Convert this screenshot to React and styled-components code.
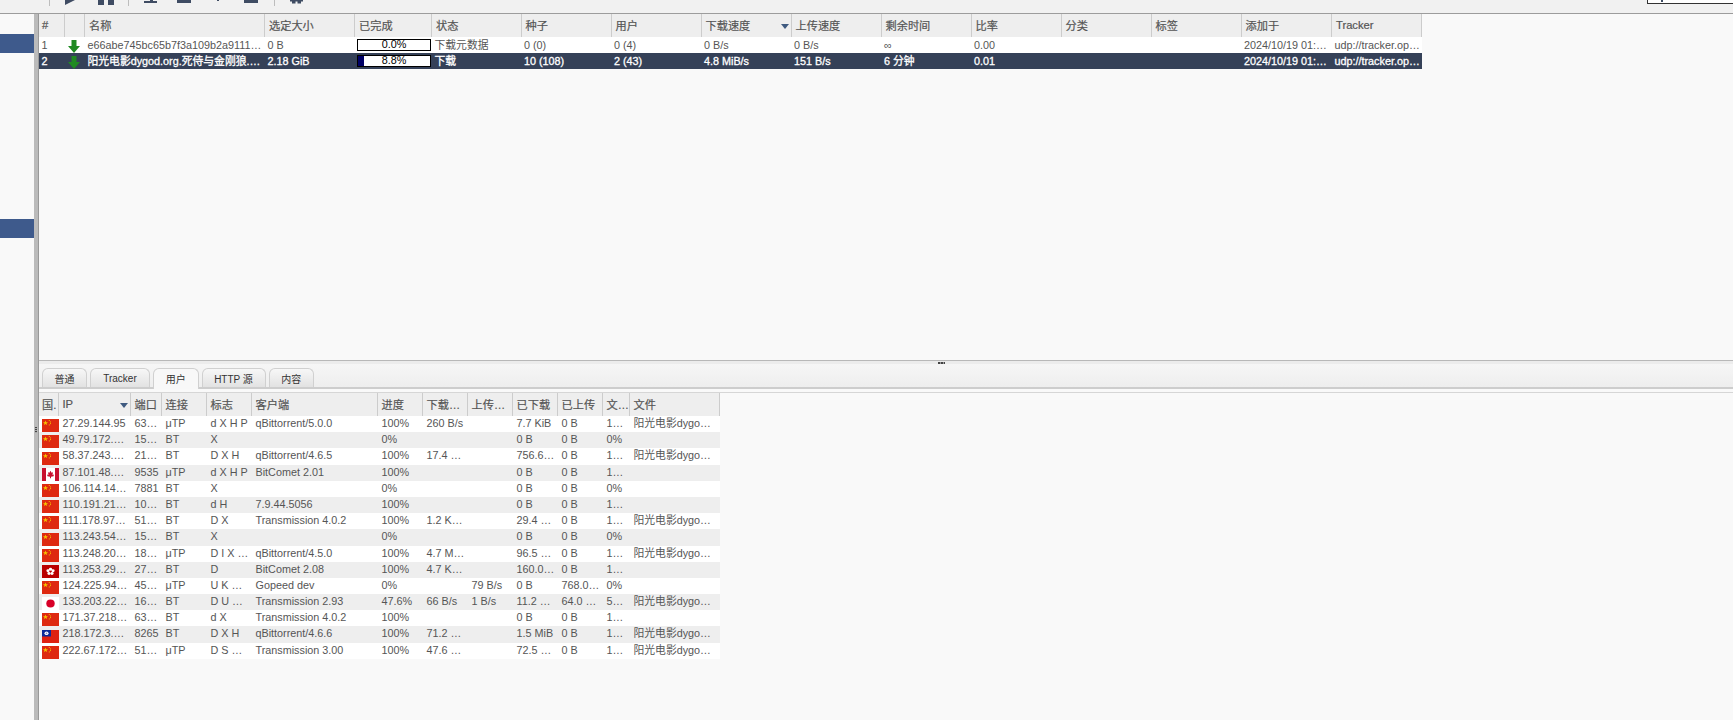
import React from 'react'
import styled, {createGlobalStyle} from 'styled-components'

const GlobalStyle = createGlobalStyle`
  html, body {
    margin: 0;
    padding: 0;
    height: 100%;
    overflow: hidden;
    background: #f9f9f9;
    color: #555;
    font-family: "Liberation Sans", "Noto Sans CJK SC", sans-serif;
    font-size: 10.8px;
  }
`

const Page = styled.div`
  display: flex;
  flex-direction: column;
  width: 1733px;
  height: 720px;
  overflow: hidden;
`

const Toolbar = styled.div`
  display: flex;
  align-items: flex-start;
  flex: none;
  height: 13px;
  padding-left: 49px;
  background: #f1f1f1;
  border-bottom: 1px solid #9c9c9c;
  overflow: hidden;
`

const ToolGroup = styled.div`
  display: flex;
  gap: 17px;
  height: 6px;
  padding: 0 ${(p) => p.$right || 15}px 0 15px;
  border-left: 1px solid #bdbdbd;
  margin-left: ${(p) => (p.$first ? 0 : -1)}px;
`

const ToolIcon = styled.svg`
  flex: none;
  width: 16px;
  height: 16px;
  margin-top: -11px;
  fill: #3f4c63;
`

const SearchBox = styled.div`
  width: 86px;
  height: 4px;
  margin-left: auto;
  background: #fff;
  border: 1px solid #333;
  border-top: none;
  border-right: none;
  padding-left: 13px;
  box-sizing: border-box;
`

const SearchStem = styled.div`
  width: 2px;
  height: 2px;
  background: #3f4c63;
`

const Body = styled.div`
  display: flex;
  flex: 1;
  min-height: 0;
`

const Sidebar = styled.div`
  flex: none;
  width: 34px;
  padding-top: 20px;
  box-sizing: border-box;
  background: #f9f9f9;
`

const SideItem = styled.div`
  height: 18.5px;
  background: ${(p) => (p.$selected ? '#3e5a8c' : 'transparent')};
`

const VSplitter = styled.div`
  position: relative;
  flex: none;
  width: 4px;
  background: #bbb;
  border-right: 1px solid #999;
`

const VHandle = styled.div`
  position: absolute;
  left: 1px;
  top: 413px;
  width: 2px;
  height: 6px;
  background: repeating-linear-gradient(#444 0 1px, #aaa 1px 2px);
`

const Content = styled.div`
  display: flex;
  flex: 1;
  flex-direction: column;
  min-width: 0;
`

const TopPanel = styled.div`
  flex: none;
  height: 346px;
  background: #f9f9f9;
`

const HSplitter = styled.div`
  display: flex;
  justify-content: center;
  flex: none;
  height: 4px;
  padding-left: 110px;
  box-sizing: border-box;
  background: #ececec;
  border-top: 1px solid #b8b8b8;
`

const HHandle = styled.div`
  width: 7px;
  height: 2px;
  margin-top: 1px;
  background: repeating-linear-gradient(90deg, #444 0 2px, #999 2px 3px);
`

const TabStrip = styled.div`
  display: flex;
  align-items: flex-end;
  flex: none;
  gap: 3px;
  height: 23px;
  padding-left: 3px;
  background: linear-gradient(#f6f6f6, #eeeeee);
  border-bottom: 2px solid #cdcdcd;
`

const Tab = styled.div`
  display: flex;
  align-items: center;
  justify-content: center;
  box-sizing: border-box;
  width: ${(p) => p.$width}px;
  height: ${(p) => (p.$active ? 21 : 19)}px;
  margin-bottom: ${(p) => (p.$active ? -2 : 0)}px;
  padding-bottom: ${(p) => (p.$active ? 2 : 0)}px;
  color: #333;
  font-size: 10px;
  background: ${(p) => (p.$active ? '#f8f8f8' : 'linear-gradient(#f7f7f7, #e2e2e2)')};
  border: 1px solid #d0d0d0;
  border-bottom: none;
  border-radius: 6px 6px 0 0;
`

const TabGap = styled.div`
  flex: none;
  height: 3px;
  border-bottom: 1px solid #d6d6d6;
`

const Table = styled.div`
  width: ${(p) => p.$width}px;
`

const HeadRow = styled.div`
  display: grid;
  grid-template-columns: ${(p) => p.$cols};
  height: 23px;
  background: #eee;
`

const HeadCell = styled.div`
  position: relative;
  display: flex;
  align-items: center;
  padding: 0 0 2px ${(p) => p.$pad}px;
  color: #555;
  font-size: 11.2px;
  -webkit-text-stroke: 0.2px #555;
  white-space: nowrap;
  overflow: hidden;
  border-right: 1px solid #ccc;
`

const SortMark = styled.span`
  position: absolute;
  right: 2px;
  top: 10px;
  width: 0;
  height: 0;
  border-left: 4px solid transparent;
  border-right: 4px solid transparent;
  border-top: 5px solid #3f5a80;
`

const Row = styled.div`
  display: grid;
  grid-template-columns: ${(p) => p.$cols};
  height: ${(p) => p.$height}px;
  line-height: ${(p) => p.$line}px;
  color: ${(p) => (p.$selected ? '#fff' : '#555')};
  -webkit-text-stroke: ${(p) => (p.$selected ? '0.3px #fff' : '0')};
  background: ${(p) => (p.$selected ? '#354158' : p.$shade ? '#eee' : '#fff')};
`

const Cell = styled.div`
  padding-left: ${(p) => p.$pad}px;
  white-space: nowrap;
  overflow: hidden;
`

const ArrowCell = styled.div`
  display: flex;
  padding: 3px 0 0 3px;
  overflow: hidden;
`

const FlagCell = styled.div`
  display: flex;
  align-items: flex-end;
  padding-left: 3px;
  overflow: hidden;
`

const FlagSvg = styled.svg`
  flex: none;
  width: 17px;
  height: 13px;
`

const ProgressCell = styled.div`
  display: flex;
  align-items: center;
  padding-left: 2px;
`

const ProgressBar = styled.div`
  position: relative;
  box-sizing: border-box;
  width: 74px;
  height: 11.5px;
  color: #000;
  font-size: 10.8px;
  line-height: 9.5px;
  text-align: center;
  -webkit-text-stroke: 0;
  background: #fff;
  border: 1px solid #000;
`

const ProgressFill = styled.div`
  position: absolute;
  left: 0;
  top: 0;
  bottom: 0;
  background: #000066;
`

const ProgressLabel = styled.span`
  position: relative;
`

const ArrowIcon = () => (
  <svg width="12" height="13" viewBox="0 0 12 13">
    <polygon points="3.5,0 8.5,0 8.5,6 12,6 6,13 0,6 3.5,6" fill="#1f8a22" />
  </svg>
)

const Flag = ({code}) => {
  if (code === 'ca') {
    return (
      <FlagSvg viewBox="0 0 17 14" preserveAspectRatio="none">
        <rect width="17" height="14" fill="#fff" />
        <rect width="4" height="14" fill="#c8102e" />
        <rect x="13" width="4" height="14" fill="#c8102e" />
        <polygon points="8.5,3 9.6,5 11,4.5 10.5,7.5 12,7 11.5,9 9,9.5 9,11 8,11 8,9.5 5.5,9 5,7 6.5,7.5 6,4.5 7.4,5" fill="#c8102e" />
      </FlagSvg>
    )
  }
  if (code === 'hk') {
    return (
      <FlagSvg viewBox="0 0 17 14" preserveAspectRatio="none">
        <rect width="17" height="14" fill="#ba0000" />
        <g fill="#fff">
          <circle cx="8.5" cy="4.6" r="1.6" />
          <circle cx="11" cy="6.3" r="1.6" />
          <circle cx="10" cy="9.2" r="1.6" />
          <circle cx="7" cy="9.2" r="1.6" />
          <circle cx="6" cy="6.3" r="1.6" />
        </g>
        <circle cx="8.5" cy="7.2" r="0.7" fill="#ba0000" />
      </FlagSvg>
    )
  }
  if (code === 'jp') {
    return (
      <FlagSvg viewBox="0 0 17 14" preserveAspectRatio="none">
        <rect width="17" height="14" fill="#fff" />
        <circle cx="8.5" cy="7" r="4.2" fill="#d80027" />
      </FlagSvg>
    )
  }
  if (code === 'tw') {
    return (
      <FlagSvg viewBox="0 0 17 14" preserveAspectRatio="none">
        <rect width="17" height="14" fill="#de2110" />
        <rect width="9" height="7" fill="#0a2a9a" />
        <circle cx="4.5" cy="3.5" r="2" fill="#fff" />
        <circle cx="4.5" cy="3.5" r="0.9" fill="#7f8fd0" />
      </FlagSvg>
    )
  }
  return (
    <FlagSvg viewBox="0 0 17 14" preserveAspectRatio="none">
      <rect width="17" height="14" fill="#de2910" />
      <polygon points="3.5,1.6 4.2,3.5 6.1,3.5 4.6,4.7 5.1,6.5 3.5,5.4 1.9,6.5 2.4,4.7 0.9,3.5 2.8,3.5" fill="#f5c400" />
      <g fill="#f5c400">
        <rect x="6.8" y="1.2" width="1" height="1" />
        <rect x="8" y="2.7" width="1" height="1" />
        <rect x="8" y="4.5" width="1" height="1" />
        <rect x="6.8" y="5.9" width="1" height="1" />
      </g>
    </FlagSvg>
  )
}

const torrentCols = '26px 20px 180px 90px 77px 89.5px 90px 90px 90px 90px 90px 90px 90px 90px 90.5px 90px'
const torrentHead = ['#', '', '名称', '选定大小', '已完成', '状态', '种子', '用户', '下载速度', '上传速度', '剩余时间', '比率', '分类', '标签', '添加于', 'Tracker']

const torrents = [
  {id: '1', name: 'e66abe745bc65b7f3a109b2a9111…', size: '0 B', pct: 0, pctText: '0.0%', status: '下载元数据', seeds: '0 (0)', peers: '0 (4)', dl: '0 B/s', ul: '0 B/s', eta: '∞', ratio: '0.00'},
  {id: '2', name: '阳光电影dygod.org.死侍与金刚狼.…', size: '2.18 GiB', pct: 8.8, pctText: '8.8%', status: '下载', seeds: '10 (108)', peers: '2 (43)', dl: '4.8 MiB/s', ul: '151 B/s', eta: '6 分钟', ratio: '0.01', selected: true}
]

const peerCols = '19.5px 72px 31px 45px 45px 126px 45px 45px 45px 45px 45px 27px 90.5px'
const peerHead = ['国.', 'IP', '端口', '连接', '标志', '客户端', '进度', '下载…', '上传…', '已下载', '已上传', '文…', '文件']
const fileName = '阳光电影dygo…'

const peers = [
  ['cn', '27.29.144.95', '63…', 'μTP', 'd X H P', 'qBittorrent/5.0.0', '100%', '260 B/s', '', '7.7 KiB', '0 B', '1…', fileName],
  ['cn', '49.79.172.…', '15…', 'BT', 'X', '', '0%', '', '', '0 B', '0 B', '0%', ''],
  ['cn', '58.37.243.…', '21…', 'BT', 'D X H', 'qBittorrent/4.6.5', '100%', '17.4 …', '', '756.6…', '0 B', '1…', fileName],
  ['ca', '87.101.48.…', '9535', 'μTP', 'd X H P', 'BitComet 2.01', '100%', '', '', '0 B', '0 B', '1…', ''],
  ['cn', '106.114.14…', '7881', 'BT', 'X', '', '0%', '', '', '0 B', '0 B', '0%', ''],
  ['cn', '110.191.21…', '10…', 'BT', 'd H', '7.9.44.5056', '100%', '', '', '0 B', '0 B', '1…', ''],
  ['cn', '111.178.97…', '51…', 'BT', 'D X', 'Transmission 4.0.2', '100%', '1.2 K…', '', '29.4 …', '0 B', '1…', fileName],
  ['cn', '113.243.54…', '15…', 'BT', 'X', '', '0%', '', '', '0 B', '0 B', '0%', ''],
  ['cn', '113.248.20…', '18…', 'μTP', 'D I X …', 'qBittorrent/4.5.0', '100%', '4.7 M…', '', '96.5 …', '0 B', '1…', fileName],
  ['hk', '113.253.29…', '27…', 'BT', 'D', 'BitComet 2.08', '100%', '4.7 K…', '', '160.0…', '0 B', '1…', ''],
  ['cn', '124.225.94…', '45…', 'μTP', 'U K …', 'Gopeed dev', '0%', '', '79 B/s', '0 B', '768.0…', '0%', ''],
  ['jp', '133.203.22…', '16…', 'BT', 'D U …', 'Transmission 2.93', '47.6%', '66 B/s', '1 B/s', '11.2 …', '64.0 …', '5…', fileName],
  ['cn', '171.37.218…', '63…', 'BT', 'd X', 'Transmission 4.0.2', '100%', '', '', '0 B', '0 B', '1…', ''],
  ['tw', '218.172.3.…', '8265', 'BT', 'D X H', 'qBittorrent/4.6.6', '100%', '71.2 …', '', '1.5 MiB', '0 B', '1…', fileName],
  ['cn', '222.67.172…', '51…', 'μTP', 'D S …', 'Transmission 3.00', '100%', '47.6 …', '', '72.5 …', '0 B', '1…', fileName]
]

const tabs = [
  {label: '普通', width: 45},
  {label: 'Tracker', width: 60},
  {label: '用户', width: 45.5, active: true},
  {label: 'HTTP 源', width: 64},
  {label: '内容', width: 45.5}
]

const sideItems = Array.from({length: 11}, (_, i) => i)

export default function App () {
  return (
    <Page>
      <GlobalStyle />
      <Toolbar>
        <ToolGroup $first>
          <ToolIcon viewBox="0 0 16 16"><polygon points="0,0 16,8 0,16" /></ToolIcon>
          <ToolIcon viewBox="0 0 16 16"><rect width="6" height="16" /><rect x="10" width="6" height="16" /></ToolIcon>
        </ToolGroup>
        <ToolGroup $right={16}>
          <ToolIcon viewBox="0 0 16 16"><rect x="6" width="3" height="13" /><rect x="0" y="12" width="13" height="2" /></ToolIcon>
          <ToolIcon viewBox="0 0 16 16"><rect x="0" y="11" width="14" height="3" /></ToolIcon>
          <ToolIcon viewBox="0 0 16 16"><rect x="7" y="8" width="2" height="4" /></ToolIcon>
          <ToolIcon viewBox="0 0 16 16"><rect x="1" y="11" width="14" height="3" /></ToolIcon>
        </ToolGroup>
        <ToolGroup>
          <ToolIcon viewBox="0 0 16 16"><rect x="0" y="8" width="13" height="4.5" /><rect x="2" y="12" width="3.5" height="2.5" /><rect x="7.5" y="12" width="3.5" height="2.5" /></ToolIcon>
        </ToolGroup>
        <SearchBox><SearchStem /></SearchBox>
      </Toolbar>
      <Body>
        <Sidebar>
          {sideItems.map((i) => <SideItem key={i} $selected={i === 0 || i === 10} />)}
        </Sidebar>
        <VSplitter><VHandle /></VSplitter>
        <Content>
          <TopPanel>
            <Table $width={1383}>
              <HeadRow $cols={torrentCols}>
                {torrentHead.map((label, i) => (
                  <HeadCell key={i} $pad={i === 0 ? 3 : 4}>
                    {label}
                    {label === '下载速度' && <SortMark />}
                  </HeadCell>
                ))}
              </HeadRow>
              {torrents.map((t) => (
                <Row key={t.id} $cols={torrentCols} $height={16} $line={17} $selected={t.selected}>
                  <Cell $pad={2.5}>{t.id}</Cell>
                  <ArrowCell><ArrowIcon /></ArrowCell>
                  <Cell $pad={2.5}>{t.name}</Cell>
                  <Cell $pad={2.5}>{t.size}</Cell>
                  <ProgressCell>
                    <ProgressBar>
                      <ProgressFill style={{width: `${t.pct}%`}} />
                      <ProgressLabel>{t.pctText}</ProgressLabel>
                    </ProgressBar>
                  </ProgressCell>
                  <Cell $pad={2.5}>{t.status}</Cell>
                  <Cell $pad={2.5}>{t.seeds}</Cell>
                  <Cell $pad={2.5}>{t.peers}</Cell>
                  <Cell $pad={2.5}>{t.dl}</Cell>
                  <Cell $pad={2.5}>{t.ul}</Cell>
                  <Cell $pad={2.5}>{t.eta}</Cell>
                  <Cell $pad={2.5}>{t.ratio}</Cell>
                  <Cell />
                  <Cell />
                  <Cell $pad={2.5}>2024/10/19 01:…</Cell>
                  <Cell $pad={2.5}>udp://tracker.op…</Cell>
                </Row>
              ))}
            </Table>
          </TopPanel>
          <HSplitter><HHandle /></HSplitter>
          <TabStrip>
            {tabs.map((t) => <Tab key={t.label} $width={t.width} $active={t.active}>{t.label}</Tab>)}
          </TabStrip>
          <TabGap />
          <Table $width={681}>
            <HeadRow $cols={peerCols}>
              {peerHead.map((label, i) => (
                <HeadCell key={i} $pad={i === 0 ? 3 : 4}>
                  {label}
                  {label === 'IP' && <SortMark />}
                </HeadCell>
              ))}
            </HeadRow>
            {peers.map(([code, ...cells], i) => (
              <Row key={i} $cols={peerCols} $height={16.2} $line={15.2} $shade={i % 2 === 1}>
                <FlagCell><Flag code={code} /></FlagCell>
                {cells.map((text, j) => <Cell key={j} $pad={4}>{text}</Cell>)}
              </Row>
            ))}
          </Table>
        </Content>
      </Body>
    </Page>
  )
}
